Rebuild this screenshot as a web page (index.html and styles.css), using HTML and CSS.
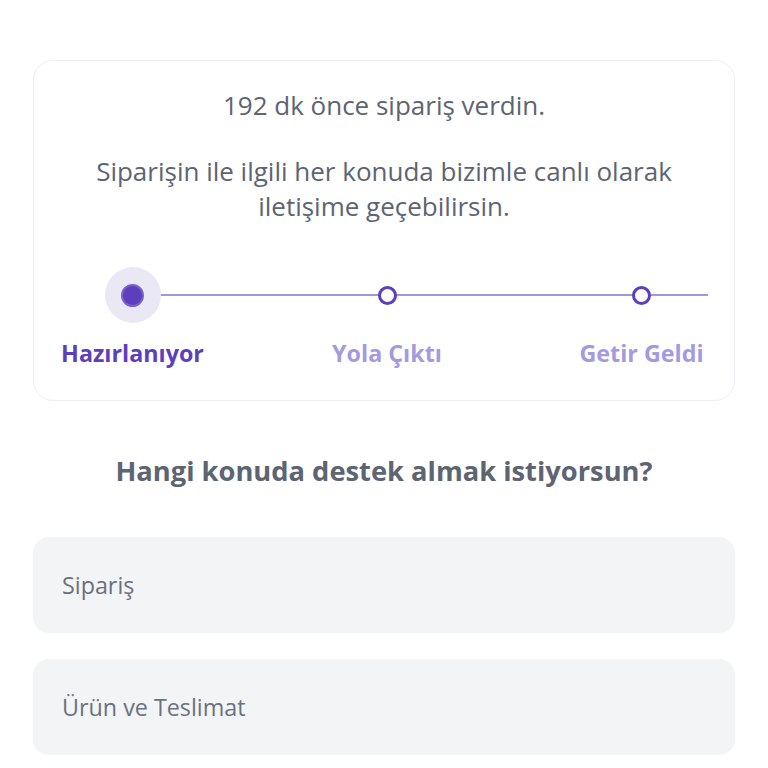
FILE: index.html
```html
<!DOCTYPE html>
<html lang="tr">
<head>
<meta charset="utf-8">
<link rel="stylesheet" href="styles.css">
</head>
<body>
<div class="page">
  <section class="card">
    <p class="ago">192 dk önce sipariş verdin.</p>
    <p class="info">Siparişin ile ilgili her konuda bizimle canlı olarak iletişime geçebilirsin.</p>
    <div class="stepper">
      <div class="track"></div>
      <div class="step active">
        <div class="dot-wrap"><span class="halo"></span><span class="dot"></span></div>
        <span class="label">Hazırlanıyor</span>
      </div>
      <div class="step">
        <div class="dot-wrap"><span class="ring"></span></div>
        <span class="label">Yola Çıktı</span>
      </div>
      <div class="step">
        <div class="dot-wrap"><span class="ring"></span></div>
        <span class="label">Getir Geldi</span>
      </div>
    </div>
  </section>
  <h2 class="question">Hangi konuda destek almak istiyorsun?</h2>
  <div class="options">
    <div class="option">Sipariş</div>
    <div class="option">Ürün ve Teslimat</div>
  </div>
</div>
</body>
</html>
```
FILE: styles.css
```css
* { box-sizing: border-box; }
html, body { margin: 0; padding: 0; background: #fff; }
body { font-family: "Open Sans", "Noto Sans", sans-serif; color: #5d6472; }
.page { padding: 60px 33px 0; }
.card {
  border: 1.5px solid #eeeef2;
  border-radius: 20px;
  height: 341px;
  padding-top: 26px;
  text-align: center;
}
.ago { margin: 0; font-size: 26px; line-height: 36px; font-weight: 500; }
.info { margin: 31px auto 0; font-size: 26px; line-height: 35px; max-width: 630px; font-weight: 500; }
.stepper {
  position: relative;
  display: grid;
  grid-template-columns: repeat(3, 200px);
  column-gap: 54.5px;
  margin: 43px 0 0 -1.5px;
}
.track {
  position: absolute;
  left: 100px; width: 575px;
  top: 27px;
  height: 2px;
  background: #a396e0;
}
.step { display: flex; flex-direction: column; align-items: center; }
.dot-wrap { position: relative; width: 56px; height: 56px; display: flex; align-items: center; justify-content: center; }
.halo { position: absolute; inset: 0; border-radius: 50%; background: #ebe8f5; }
.dot { position: relative; width: 23px; height: 23px; border-radius: 50%; background: #5d3ebc; border: 2px solid #7a61cc; }
.ring { position: relative; width: 19px; height: 19px; border-radius: 50%; background: #fff; border: 3.5px solid #5d3ebc; }
.label { margin-top: 15px; font-size: 23.3px; line-height: 30px; font-weight: 700; color: #a49adf; white-space: nowrap; }
.active .label { color: #5d3ebc; }
.question { margin: 52px 0 0; text-align: center; font-size: 27.3px; font-weight: 700; color: #5d6472; line-height: 36px; }
.options { display: flex; flex-direction: column; gap: 26px; margin-top: 48px; }
.option {
  background: #f3f4f6;
  border-radius: 16px;
  height: 96px;
  display: flex; align-items: center;
  padding-left: 29px;
  font-size: 23.3px;
  color: #6b7180;
}
```
